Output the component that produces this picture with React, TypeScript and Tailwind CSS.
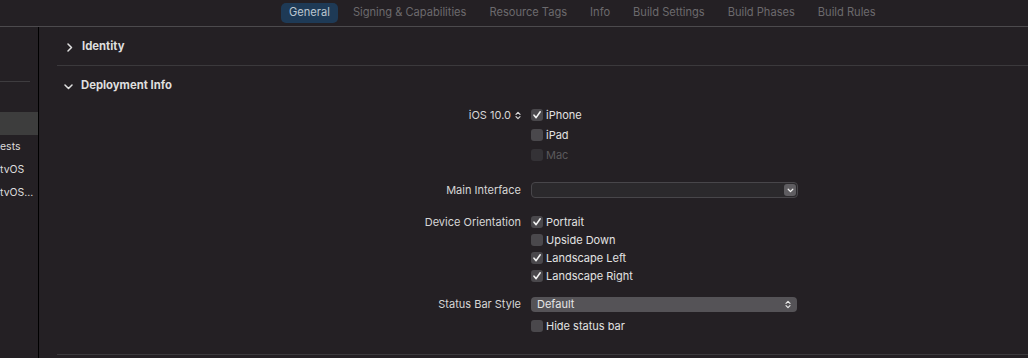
import React from "react";

const tabs = ["Signing & Capabilities", "Resource Tags", "Info", "Build Settings", "Build Phases", "Build Rules"];

function Check({ checked, disabled }: { checked?: boolean; disabled?: boolean }) {
  return (
    <div
      className={
        "w-[12px] h-[12px] rounded-[3px] flex items-center justify-center shrink-0 " +
        (disabled ? "bg-[#343236]" : "bg-[#4a484c]")
      }
    >
      {checked && (
        <svg width="10" height="10" viewBox="0 0 10 10">
          <path d="M2 5.2 L4.1 7.6 L8.2 1.8" stroke="#f2f2f2" strokeWidth="1.6" fill="none" strokeLinecap="round" strokeLinejoin="round" />
        </svg>
      )}
    </div>
  );
}

function CheckRow({ label, checked, disabled, h = 18 }: { label: string; checked?: boolean; disabled?: boolean; h?: number }) {
  return (
    <div className="flex items-center gap-[3px]" style={{ height: h }}>
      <Check checked={checked} disabled={disabled} />
      <span className={disabled ? "text-[#5b595c]" : "text-[#e2e2e2]"}>{label}</span>
    </div>
  );
}

function UpDown({ color = "#d8d8d8" }: { color?: string }) {
  return (
    <svg width="6" height="9" viewBox="0 0 6 9">
      <path d="M1 3.3 L3 1.3 L5 3.3 M1 5.7 L3 7.7 L5 5.7" stroke={color} strokeWidth="1.2" fill="none" strokeLinecap="round" strokeLinejoin="round" />
    </svg>
  );
}

export default function App() {
  return (
    <div
      className="w-[1028px] h-[358px] overflow-hidden bg-[#242024] flex flex-col text-[11px] leading-none"
      style={{ fontFamily: "Inter, 'Noto Sans', sans-serif" }}
    >
      {/* top tab bar */}
      <div className="h-[27px] shrink-0 border-b border-[#4c4a4d] flex items-center pl-[281px] gap-[7px] text-[11.1px]">
        <div className="h-[20px] px-[8px] rounded-[5px] bg-[#1e3a56] text-[#bcc6d0] flex items-center">General</div>
        {tabs.map((t) => (
          <div key={t} className="h-[20px] px-[8px] text-[#6c6a6d] flex items-center">
            {t}
          </div>
        ))}
      </div>

      <div className="flex flex-1 min-h-0">
        {/* sidebar */}
        <div className="w-[39px] shrink-0 border-r border-black flex flex-col overflow-hidden text-[10.5px]">
          <div className="h-[54px] shrink-0" />
          <div className="h-px w-[30px] bg-[#3e3c3f]" />
          <div className="h-[30px] shrink-0" />
          <div className="h-[23px] bg-[#3d3d3d]" />
          <div className="h-[23px] pt-[2px] flex items-center text-[#dcdcdc] whitespace-nowrap">ests</div>
          <div className="h-[23px] pt-[2px] flex items-center text-[#dcdcdc] whitespace-nowrap">tvOS</div>
          <div className="h-[23px] pt-[2px] flex items-center text-[#dcdcdc] whitespace-nowrap">tvOS...</div>
        </div>

        {/* main */}
        <div className="flex-1 pl-[18px] flex flex-col">
          <div className="h-[39px] pt-[2px] border-b border-[#3b393c] flex items-center pl-[9px] gap-[9px] text-[#dedede] font-bold text-[11.3px]">
            <svg width="7" height="9" viewBox="0 0 7 9">
              <path d="M2 1 L5.5 4.5 L2 8" stroke="#e0e0e0" strokeWidth="1.5" fill="none" strokeLinecap="round" strokeLinejoin="round" />
            </svg>
            <span>Identity</span>
          </div>
          <div className="h-[38px] pt-[2px] flex items-center pl-[7px] gap-[8px] text-[#dedede] font-bold text-[11.3px]">
            <svg width="9" height="7" viewBox="0 0 9 7">
              <path d="M1 2 L4.5 5.5 L8 2" stroke="#e0e0e0" strokeWidth="1.5" fill="none" strokeLinecap="round" strokeLinejoin="round" />
            </svg>
            <span>Deployment Info</span>
          </div>

          {/* form */}
          <div className="flex flex-col mt-[1px] text-[#d6d6d6]">
            <div className="flex">
              <div className="w-[464px] h-[20px] flex items-center justify-end gap-[4px]">
                <span>iOS 10.0</span>
                <UpDown />
              </div>
              <div className="ml-[10px] flex flex-col">
                <CheckRow label="iPhone" checked h={20} />
                <CheckRow label="iPad" h={20} />
                <CheckRow label="Mac" disabled h={20} />
              </div>
            </div>

            <div className="flex mt-[16px] h-[18px] items-center">
              <div className="w-[464px] text-right">Main Interface</div>
              <div className="ml-[10px] w-[267px] h-[16px] rounded-[4px] bg-[#2b292c] border border-[#48464a] flex items-center justify-end pr-[1px]">
                <div className="w-[12px] h-[12px] rounded-[3px] bg-[#5f5d61] flex items-center justify-center">
                  <svg width="7" height="5" viewBox="0 0 7 5">
                    <path d="M1.2 1.3 L3.5 3.6 L5.8 1.3" stroke="#f0f0f0" strokeWidth="1.3" fill="none" strokeLinecap="round" strokeLinejoin="round" />
                  </svg>
                </div>
              </div>
            </div>

            <div className="flex mt-[14px]">
              <div className="w-[464px] h-[18px] flex items-center justify-end">Device Orientation</div>
              <div className="ml-[10px] flex flex-col">
                <CheckRow label="Portrait" checked />
                <CheckRow label="Upside Down" />
                <CheckRow label="Landscape Left" checked />
                <CheckRow label="Landscape Right" checked />
              </div>
            </div>

            <div className="flex mt-[10px] h-[18px] items-center">
              <div className="w-[464px] text-right">Status Bar Style</div>
              <div className="ml-[10px] w-[266px] h-[15px] rounded-[4px] bg-[#555357] flex items-center justify-between pl-[6px] pr-[6px] text-[#e6e6e6]">
                <span>Default</span>
                <UpDown color="#e8e8e8" />
              </div>
            </div>

            <div className="flex mt-[4px]">
              <div className="w-[464px]" />
              <div className="ml-[10px]">
                <CheckRow label="Hide status bar" />
              </div>
            </div>
          </div>

          <div className="mt-[19px] h-px bg-[#3b393c]" />
        </div>
      </div>
    </div>
  );
}
